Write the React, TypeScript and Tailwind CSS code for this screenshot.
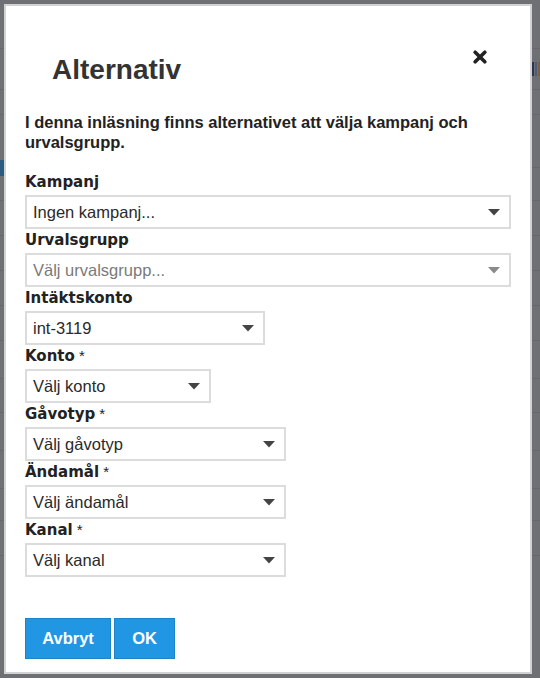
import React from "react";

const font = { fontFamily: '"Liberation Sans", Arial, sans-serif' };
const labelFont = { fontFamily: '"DejaVu Sans", Verdana, sans-serif' };

function Arrow({ disabled }: { disabled?: boolean }) {
  return (
    <svg width="12" height="7" viewBox="0 0 12 7" className="shrink-0">
      <path d="M0 0 L12 0 L6 6.5 Z" fill={disabled ? "#8a8a8a" : "#444444"} />
    </svg>
  );
}

function Field({
  label,
  required,
  value,
  width,
  placeholder,
}: {
  label: string;
  required?: boolean;
  value: string;
  width: string;
  placeholder?: boolean;
}) {
  return (
    <div className="flex flex-col">
      <div className="text-[15px] leading-[22px] mb-[2px] font-bold text-[#222]" style={labelFont}>
        {label}
        {required && (
          <span className="font-normal text-[15px]" style={font}>
            {"  *"}
          </span>
        )}
      </div>
      <div
        className={`${width} h-[34px] border-2 border-[#dcdcdc] bg-white flex items-center justify-between pl-[6px] pr-[9px]`}
      >
        <span
          className={`text-[16.5px] ${placeholder ? "text-[#7a7a7a]" : "text-[#2a2a2a]"}`}
        >
          {value}
        </span>
        <Arrow disabled={placeholder} />
      </div>
    </div>
  );
}

export default function App() {
  const lines = [48, 89, 114, 167, 200, 235, 270, 305, 340, 378, 412, 450, 488, 520, 555];
  return (
    <div className="relative w-[540px] h-[678px] bg-[#6e7074] overflow-hidden" style={font}>
      {/* backdrop page hints */}
      <div className="absolute inset-0">
        {lines.map((y) => (
          <div
            key={y}
            className="absolute left-0 right-0 h-px bg-[#66686c]"
            style={{ top: y }}
          />
        ))}
        <div className="absolute left-0 top-[160px] w-[4px] h-[16px] bg-[#2c5a7e]" />
        <div className="absolute right-[0px] top-[62px] w-[8px] h-[14px] flex gap-[1px]">
          <div className="w-[2px] h-full bg-[#2b3550]" />
          <div className="w-[2px] h-full bg-[#4a5d7a]" />
          <div className="w-[2px] h-full bg-[#7a6040]" />
        </div>
      </div>

      {/* dialog */}
      <div className="absolute left-[4px] top-[4px] w-[528px] h-[670px] border-2 border-[#d2d2d2] bg-white flex flex-col">
        <div className="flex items-start justify-between pt-[48px] pl-[46px] pr-[43px]">
          <h1 className="text-[28px] leading-[32px] font-bold text-[#333]">Alternativ</h1>
          <svg width="14" height="14" viewBox="0 0 14 14" className="mt-[-4px]">
            <path
              d="M2.2 2.2 L11.8 11.8 M11.8 2.2 L2.2 11.8"
              stroke="#222"
              strokeWidth="3.6"
              strokeLinecap="round"
            />
          </svg>
        </div>

        <div className="pl-[19px] pr-[19px] mt-[26px]">
          <p className="text-[16.5px] leading-[20px] font-bold text-[#222] w-[480px]">
            I denna inläsning finns alternativet att välja kampanj och urvalsgrupp.
          </p>

          <div className="mt-[19px] flex flex-col">
            <Field label="Kampanj" value="Ingen kampanj..." width="w-[486px]" />
            <Field label="Urvalsgrupp" value="Välj urvalsgrupp..." width="w-[486px]" placeholder />
            <Field label="Intäktskonto" value="int-3119" width="w-[240px]" />
            <Field label="Konto" required value="Välj konto" width="w-[186px]" />
            <Field label="Gåvotyp" required value="Välj gåvotyp" width="w-[261px]" />
            <Field label="Ändamål" required value="Välj ändamål" width="w-[261px]" />
            <Field label="Kanal" required value="Välj kanal" width="w-[261px]" />
          </div>

          <div className="mt-[41px] flex gap-[3px]">
            <button className="w-[86px] h-[41px] bg-[#2196e3] border border-[#1d84c9] text-white font-bold text-[16.5px]">
              Avbryt
            </button>
            <button className="w-[61px] h-[41px] bg-[#2196e3] border border-[#1d84c9] text-white font-bold text-[16.5px]">
              OK
            </button>
          </div>
        </div>
      </div>
    </div>
  );
}
